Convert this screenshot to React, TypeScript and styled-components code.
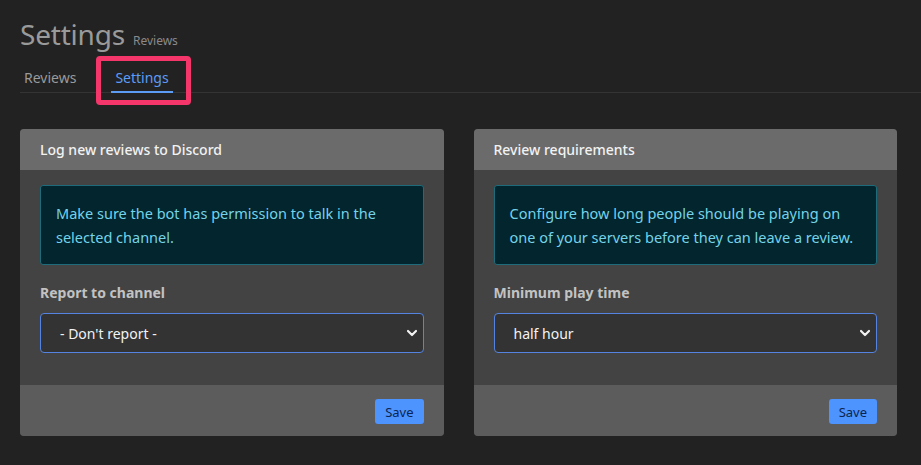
import React from "react";
import styled, { createGlobalStyle } from "styled-components";

const GlobalStyle = createGlobalStyle`
  html, body {
    margin: 0;
    padding: 0;
    background: #222222;
  }
  body {
    font-family: "Noto Sans", "Open Sans", sans-serif;
  }
`;

const Page = styled.div`
  min-height: 465px;
  box-sizing: border-box;
  padding: 14px 0 0 20px;
  background: #222222;
`;

const TitleRow = styled.div`
  display: flex;
  align-items: baseline;
  gap: 8px;
`;

const Title = styled.h1`
  margin: 0;
  font-size: 28px;
  font-weight: 400;
  line-height: 40px;
  color: #9a9a9a;
  letter-spacing: -0.2px;
`;

const Subtitle = styled.span`
  font-size: 12px;
  color: #8a8a8a;
`;

const Tabs = styled.div`
  display: flex;
  gap: 31px;
  margin-top: 13px;
  border-bottom: 1px solid #343434;
`;

const Tab = styled.div<{ active?: boolean }>`
  position: relative;
  padding: 0 4px 2px;
  font-size: 14px;
  line-height: 22px;
  color: ${(p) => (p.active ? "#5c9cf5" : "#9a9a9a")};
  border-bottom: 2px solid ${(p) => (p.active ? "#5c9cf5" : "transparent")};
  margin-bottom: -1px;
`;

const Highlight = styled.div`
  position: absolute;
  left: -15px;
  top: -11px;
  width: 95px;
  height: 49px;
  box-sizing: border-box;
  border: 5px solid #f5366b;
  border-radius: 4px;
  pointer-events: none;
`;

const Grid = styled.div`
  display: grid;
  grid-template-columns: 1fr 1fr;
  gap: 30px;
  margin: 36px 24px 0 0;
`;

const Card = styled.div`
  border-radius: 4px;
  overflow: hidden;
  background: #434343;
`;

const CardHeader = styled.div`
  height: 41px;
  display: flex;
  align-items: center;
  padding: 0 20px;
  background: #6b6b6b;
  color: #f2f2f2;
  font-size: 14px;
  font-weight: 500;
`;

const CardBody = styled.div`
  padding: 15px 20px 32px;
`;

const Alert = styled.div`
  background: #03252e;
  border: 1px solid #1d6b7b;
  border-radius: 3px;
  padding: 15px 15px;
  color: #74d3e8;
  font-size: 14.5px;
  line-height: 24px;
`;

const Label = styled.div`
  margin-top: 18px;
  font-size: 14px;
  font-weight: 700;
  line-height: 20px;
  color: #c2c2c2;
`;

const SelectWrap = styled.div`
  position: relative;
  margin-top: 10px;
`;

const Select = styled.select`
  appearance: none;
  -webkit-appearance: none;
  width: 100%;
  height: 40px;
  box-sizing: border-box;
  padding: 0 30px 0 19px;
  background: #333333;
  border: 1px solid #5584e0;
  border-radius: 4px;
  color: #f2f2f2;
  font-family: "Noto Sans", "Open Sans", sans-serif;
  font-size: 14px;
  outline: none;
`;

const Chevron = styled.svg`
  position: absolute;
  right: 6px;
  top: 15px;
  pointer-events: none;
`;

const CardFooter = styled.div`
  display: flex;
  justify-content: flex-end;
  padding: 14px 20px 12px;
  background: #5c5c5c;
`;

const SaveButton = styled.button`
  height: 25px;
  padding: 0 10px;
  border: none;
  border-radius: 3px;
  background: #4d94ff;
  color: #0c2550;
  font-family: "Noto Sans", "Open Sans", sans-serif;
  font-size: 13px;
`;

type CardProps = {
  title: string;
  info: string;
  label: string;
  value: string;
};

const SettingsCard = ({ title, info, label, value }: CardProps) => (
  <Card>
    <CardHeader>{title}</CardHeader>
    <CardBody>
      <Alert>{info}</Alert>
      <Label>{label}</Label>
      <SelectWrap>
        <Select defaultValue={value}>
          <option value={value}>{value}</option>
        </Select>
        <Chevron width="12" height="10" viewBox="0 0 12 10">
          <path d="M2 3 L6 7 L10 3" fill="none" stroke="#f2f2f2" strokeWidth="2.2" strokeLinecap="round" strokeLinejoin="round" />
        </Chevron>
      </SelectWrap>
    </CardBody>
    <CardFooter>
      <SaveButton>Save</SaveButton>
    </CardFooter>
  </Card>
);

export default function App() {
  return (
    <>
      <GlobalStyle />
      <Page>
        <TitleRow>
          <Title>Settings</Title>
          <Subtitle>Reviews</Subtitle>
        </TitleRow>
        <Tabs>
          <Tab>Reviews</Tab>
          <Tab active>
            Settings
            <Highlight />
          </Tab>
        </Tabs>
        <Grid>
          <SettingsCard
            title="Log new reviews to Discord"
            info="Make sure the bot has permission to talk in the selected channel."
            label="Report to channel"
            value="- Don't report -"
          />
          <SettingsCard
            title="Review requirements"
            info="Configure how long people should be playing on one of your servers before they can leave a review."
            label="Minimum play time"
            value="half hour"
          />
        </Grid>
      </Page>
    </>
  );
}
